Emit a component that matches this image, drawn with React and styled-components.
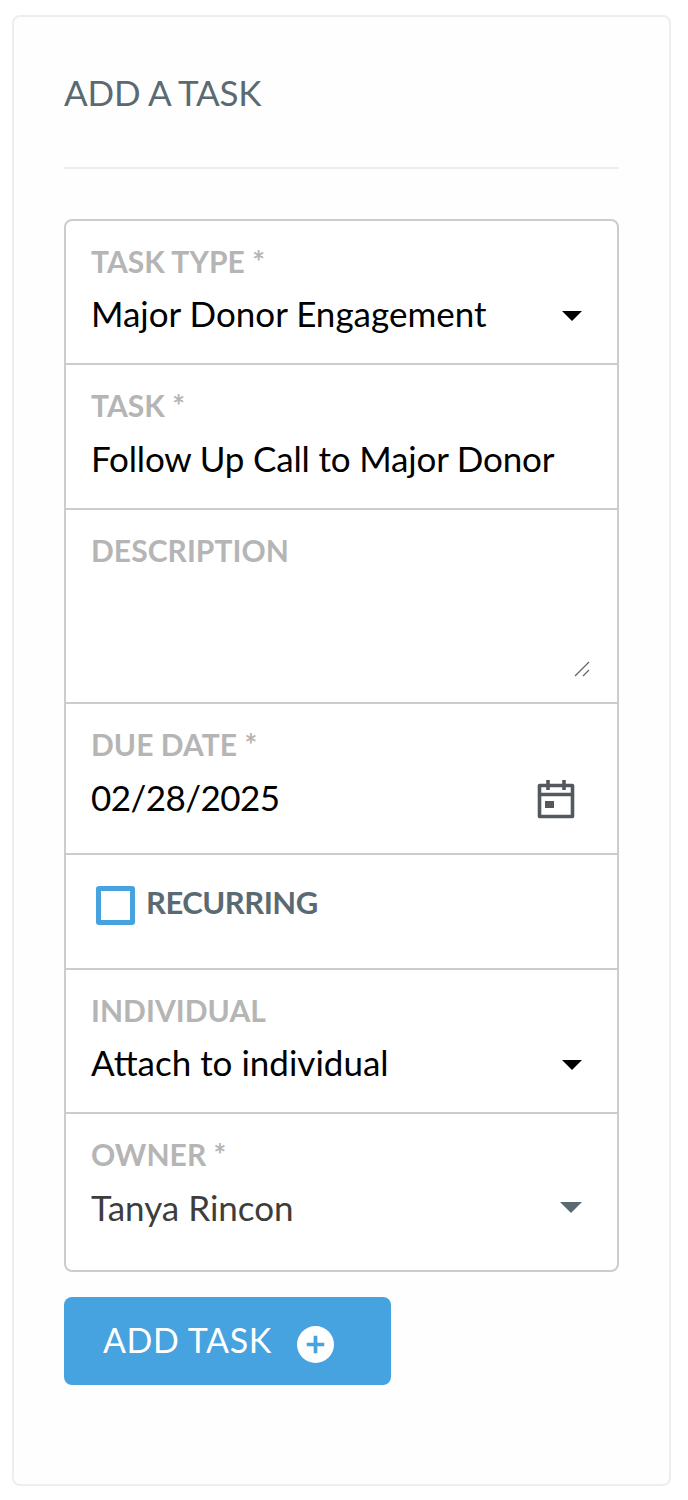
import React from "react"
import styled, { createGlobalStyle } from "styled-components"

const GlobalStyle = createGlobalStyle`
  body {
    margin: 0;
    background: #fff;
    font-family: Lato, "Liberation Sans", sans-serif;
  }
`

const Page = styled.div`
  padding: 15px 17px 14px 12px;
`

const Card = styled.div`
  box-sizing: border-box;
  height: 1471px;
  padding: 0 50px;
  background: #fefefe;
  border: 2px solid #eeeeee;
  border-radius: 8px;
`

const Heading = styled.h2`
  margin: 0;
  padding: 51px 0 51px;
  font-size: 35px;
  line-height: 48px;
  font-weight: 400;
  letter-spacing: -0.2px;
  color: #5a6a72;
  border-bottom: 2px solid #eeeeee;
`

const Fields = styled.div`
  margin-top: 50px;
  background: #fff;
  border: 2px solid #cccccc;
  border-radius: 8px;
`

const Row = styled.div`
  box-sizing: border-box;
  position: relative;
  height: ${props => props.$height}px;
  padding: 19px 25px 0;
  border-bottom: ${props => (props.$last ? "none" : "2px solid #cccccc")};
`

const Label = styled.div`
  font-size: 30px;
  line-height: 42px;
  font-weight: 700;
  letter-spacing: 0.05px;
  color: #b5b5b5;
`

const ValueRow = styled.div`
  display: flex;
  align-items: center;
  justify-content: space-between;
  height: 52px;
  margin-top: ${props => props.$top ?? 6}px;
`

const Value = styled.span`
  font-size: 35px;
  line-height: 52px;
  letter-spacing: ${props => props.$spacing || 0}px;
  color: ${props => props.$color || "#000"};
`

const Caret = styled.span`
  width: 0;
  height: 0;
  margin: ${props => props.$top || 3}px 10px 0 0;
  border-left: ${props => props.$size || 10}px solid transparent;
  border-right: ${props => props.$size || 10}px solid transparent;
  border-top: ${props => props.$size || 10}px solid ${props => props.$color || "#000"};
`

const Resize = styled.svg`
  position: absolute;
  right: 27px;
  bottom: 25px;
  width: 16px;
  height: 16px;
`

const CheckRow = styled.div`
  display: flex;
  align-items: center;
  gap: 11px;
  padding: 12px 5px 0;
`

const CheckBox = styled.span`
  box-sizing: border-box;
  width: 39px;
  height: 39px;
  background: #fff;
  border: 5px solid #47a2e0;
  border-radius: 3px;
`

const CheckLabel = styled.span`
  margin-top: -8px;
  font-size: 31px;
  line-height: 42px;
  font-weight: 700;
  letter-spacing: -0.5px;
  color: #5a6a72;
`

const AddButton = styled.button`
  display: flex;
  align-items: center;
  gap: 25px;
  width: 327px;
  height: 88px;
  margin-top: 25px;
  padding: 0 0 0 39px;
  border: none;
  border-radius: 8px;
  background: #47a2e0;
  color: #fff;
  font-family: inherit;
  font-size: 34px;
  font-weight: 400;
  letter-spacing: 0.6px;
`

const ButtonText = styled.span`
  margin-bottom: 4px;
`

const ButtonIcon = styled.svg`
  width: 37px;
  height: 37px;
  margin-top: 7px;
`

const CalendarSvg = styled.svg`
  width: 40px;
  height: 40px;
  margin: 3px 16px 0 0;
`

const PlusIcon = () => (
  <ButtonIcon viewBox="0 0 38 38">
    <circle cx="19" cy="19" r="19" fill="#fff" />
    <path d="M19 10v18M10 19h18" stroke="#47a2e0" strokeWidth="3.8" />
  </ButtonIcon>
)

const CalendarIcon = () => (
  <CalendarSvg viewBox="0 0 40 40">
    <path
      d="M3.5 6.5h33v31h-33zM3.5 15.5h33"
      fill="none"
      stroke="#54595f"
      strokeWidth="3.6"
      strokeLinejoin="round"
    />
    <path d="M12 1v10M28 1v10" stroke="#54595f" strokeWidth="3.6" />
    <rect x="9" y="22" width="9" height="7" fill="#54595f" />
  </CalendarSvg>
)

const App = () => {
  return (
    <Page>
      <GlobalStyle />
      <Card>
        <Heading>ADD A TASK</Heading>
        <Fields>
          <Row $height={144}>
            <Label>TASK TYPE *</Label>
            <ValueRow $top={5}>
              <Value>Major Donor Engagement</Value>
              <Caret $top={5} />
            </ValueRow>
          </Row>
          <Row $height={145}>
            <Label>TASK *</Label>
            <ValueRow>
              <Value $spacing={-0.17}>Follow Up Call to Major Donor</Value>
            </ValueRow>
          </Row>
          <Row $height={194}>
            <Label>DESCRIPTION</Label>
            <Resize viewBox="0 0 16 16">
              <path d="M1 15L15 1M9 15l6-6" stroke="#666" strokeWidth="1.3" fill="none" />
            </Resize>
          </Row>
          <Row $height={151}>
            <Label>DUE DATE *</Label>
            <ValueRow>
              <Value $spacing={-0.55}>02/28/2025</Value>
              <CalendarIcon />
            </ValueRow>
          </Row>
          <Row $height={115}>
            <CheckRow>
              <CheckBox />
              <CheckLabel>RECURRING</CheckLabel>
            </CheckRow>
          </Row>
          <Row $height={144}>
            <Label>INDIVIDUAL</Label>
            <ValueRow $top={5}>
              <Value>Attach to individual</Value>
              <Caret $top={6} />
            </ValueRow>
          </Row>
          <Row $height={156} $last>
            <Label>OWNER *</Label>
            <ValueRow>
              <Value $color="#3d3d3d">Tanya Rincon</Value>
              <Caret $top={1} $size={11} $color="#5a6a72" />
            </ValueRow>
          </Row>
        </Fields>
        <AddButton type="button">
          <ButtonText>ADD TASK</ButtonText>
          <PlusIcon />
        </AddButton>
      </Card>
    </Page>
  )
}

export default App
